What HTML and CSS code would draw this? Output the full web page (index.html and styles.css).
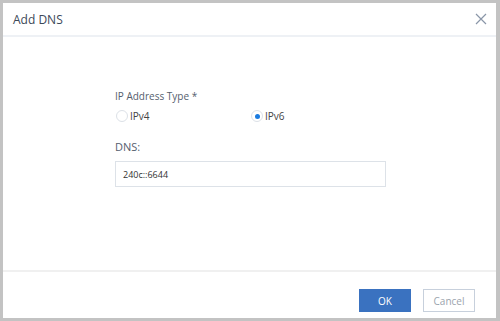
FILE: index.html
```html
<!DOCTYPE html>
<html lang="en">
<head>
  <meta charset="UTF-8" />
  <title>Add DNS</title>
  <link rel="stylesheet" href="styles.css">
</head>
<body>
  <div class="dialog">
    <header class="dialog-header">
      <h1>Add DNS</h1>
      <button class="close" aria-label="Close">
        <svg width="12" height="12" viewBox="0 0 12 12"><path d="M1 1L11 11M11 1L1 11" stroke="#8a96a8" stroke-width="1.2" fill="none"/></svg>
      </button>
    </header>

    <div class="dialog-body">
      <form class="form">
        <div class="field">
          <label class="label">IP Address Type *</label>
          <div class="radios">
            <label class="radio"><span class="dot"></span>IPv4</label>
            <label class="radio checked"><span class="dot"></span>IPv6</label>
          </div>
        </div>
        <div class="field">
          <label class="label dns">DNS:</label>
          <input class="input" type="text" value="240c::6644">
        </div>
      </form>
    </div>

    <footer class="dialog-footer">
      <button class="btn primary">OK</button>
      <button class="btn">Cancel</button>
    </footer>
  </div>
</body>
</html>
```

FILE: styles.css
```css
body {
  margin: 0;
  background: #c3c3c3;
  font-family: 'Open Sans', 'Noto Sans', sans-serif;
  color: #333;
}

.dialog {
  margin: 3px 4px 3px 3px;
  height: 315px;
  background: #fff;
  display: flex;
  flex-direction: column;
}

.dialog-header {
  height: 32px;
  display: flex;
  align-items: center;
  justify-content: space-between;
  padding: 0 8px 0 10px;
  border-bottom: 2px solid #eef1f5;
}

.dialog-header h1 {
  margin: 0;
  font-size: 12px;
  font-weight: 400;
  color: #3c4858;
}

.close {
  background: none;
  border: none;
  padding: 0;
  width: 14px;
  height: 14px;
  display: flex;
  align-items: center;
  justify-content: center;
  cursor: pointer;
}

.dialog-body {
  flex: 1;
  padding: 52px 0 0 112px;
}

.form {
  width: 271px;
}

.field {
  margin-bottom: 16px;
}

.label {
  display: block;
  font-size: 10px;
  color: #55606e;
  margin-bottom: 6px;
}

.label.dns {
  font-size: 11px;
  margin-bottom: 7px;
}

.radios {
  display: flex;
  padding-left: 1px;
}

.radio {
  width: 137px;
  display: flex;
  align-items: center;
  font-size: 10px;
  color: #444;
}

.dot {
  width: 12px;
  height: 12px;
  border: 1px solid #dce1e7;
  border-radius: 50%;
  box-sizing: border-box;
  margin-right: 2px;
  position: relative;
}

.radio.checked .dot::after {
  content: '';
  position: absolute;
  left: 2.5px;
  top: 2.5px;
  width: 5px;
  height: 5px;
  border-radius: 50%;
  background: #1a7be0;
}

.input {
  display: block;
  width: 100%;
  height: 26px;
  box-sizing: border-box;
  border: 1px solid #dde2e8;
  padding: 0 7px;
  font-family: inherit;
  font-size: 9px;
  color: #333;
  outline: none;
}

.dialog-footer {
  height: 48px;
  border-top: 2px solid #f0f0f0;
  display: flex;
  justify-content: flex-end;
  align-items: flex-start;
  gap: 12px;
  padding: 17px 21px 0 0;
  box-sizing: border-box;
}

.btn {
  width: 52px;
  height: 23px;
  font-family: inherit;
  font-size: 10px;
  background: #fff;
  color: #9aa3ad;
  border: 1px solid #c7d0dc;
  padding: 0;
}

.btn.primary {
  background: #3a72c0;
  border-color: #3a72c0;
  color: #fff;
}
```
